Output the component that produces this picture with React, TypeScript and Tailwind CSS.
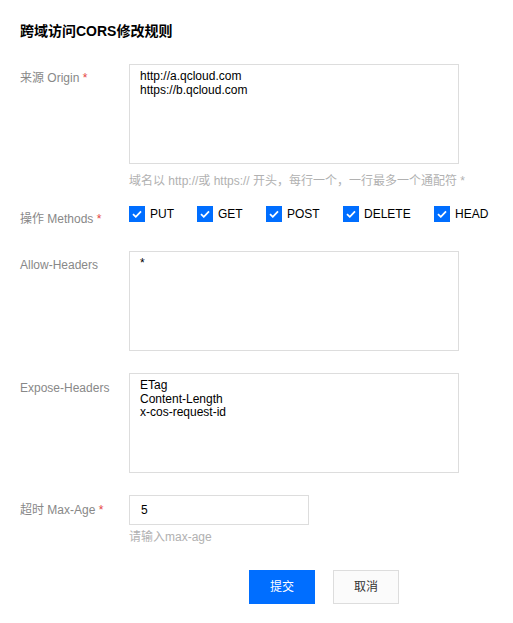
const font = '[font-family:"Liberation_Sans","Noto_Sans_CJK_SC",sans-serif]'

const methods = [
  { name: 'PUT', w: 'w-[68px]' },
  { name: 'GET', w: 'w-[69px]' },
  { name: 'POST', w: 'w-[77px]' },
  { name: 'DELETE', w: 'w-[91px]' },
  { name: 'HEAD', w: 'w-auto' },
]

function Label({ text, required, pt = 'pt-[7px]' }: { text: string; required?: boolean; pt?: string }) {
  return (
    <div className={`w-[129px] shrink-0 pl-5 text-xs leading-[14px] text-[#888] whitespace-nowrap ${pt}`}>
      {text}
      {required && <span className="text-[#e54545]"> *</span>}
    </div>
  )
}

function Box({ lines }: { lines: string[] }) {
  return (
    <div className="w-[330px] h-[100px] border border-[#dddddd] bg-white px-[10px] pt-[5px] text-xs leading-[13.5px] text-[#000]">
      {lines.map((l) => (
        <div key={l}>{l}</div>
      ))}
    </div>
  )
}

function Check() {
  return (
    <span className="w-4 h-4 bg-[#006eff] flex items-center justify-center shrink-0">
      <svg width="10" height="8" viewBox="0 0 10 8" fill="none">
        <path d="M1 4.2 3.8 6.8 9 1.4" stroke="white" strokeWidth="1.8" />
      </svg>
    </span>
  )
}

export default function App() {
  return (
    <div className={`w-[513px] h-[623px] bg-white ${font}`}>
      <h1 className="pl-5 pt-[23px] text-sm font-bold leading-4 text-black">跨域访问CORS修改规则</h1>

      <div className="flex mt-[25px]">
        <Label text="来源 Origin" required />
        <div>
          <Box lines={['http://a.qcloud.com', 'https://b.qcloud.com']} />
          <div className="mt-[10px] text-xs leading-[14px] text-[#b1b1b1]">
            域名以 http://或 https:// 开头，每行一个，一行最多一个通配符 *
          </div>
        </div>
      </div>

      <div className="flex h-4 mt-[18px]">
        <Label text="操作 Methods" required pt="pt-[6px]" />
        <div className="flex">
          {methods.map((m) => (
            <label key={m.name} className={`flex items-center gap-[5px] ${m.w}`}>
              <Check />
              <span className="text-xs leading-4 text-black">{m.name}</span>
            </label>
          ))}
        </div>
      </div>

      <div className="flex mt-[29px]">
        <Label text="Allow-Headers" />
        <Box lines={['*']} />
      </div>

      <div className="flex mt-[22px]">
        <Label text="Expose-Headers" pt="pt-[8px]" />
        <Box lines={['ETag', 'Content-Length', 'x-cos-request-id']} />
      </div>

      <div className="flex mt-[22px]">
        <Label text="超时 Max-Age" required pt="pt-[8px]" />
        <div>
          <div className="w-[180px] h-[30px] border border-[#dddddd] flex items-center px-[11px] text-xs text-[#000]">5</div>
          <div className="mt-[5px] text-xs leading-[14px] text-[#b1b1b1]">请输入max-age</div>
        </div>
      </div>

      <div className="flex gap-[18px] pl-[249px] mt-[26px]">
        <button className="w-[66px] h-[34px] bg-[#006eff] text-white text-xs">提交</button>
        <button className="w-[66px] h-[34px] bg-[#fbfbfb] border border-[#dddddd] text-[#333] text-xs">取消</button>
      </div>
    </div>
  )
}
